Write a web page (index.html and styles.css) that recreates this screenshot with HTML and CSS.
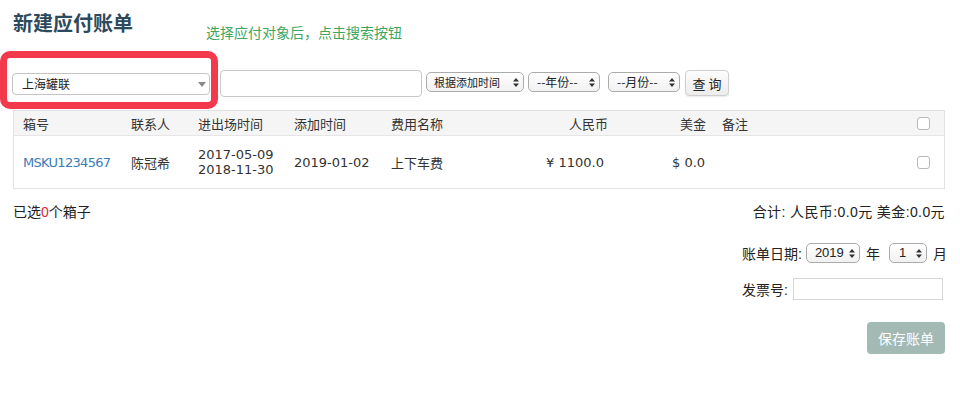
FILE: index.html
```html
<!DOCTYPE html>
<html lang="zh">
<head>
<meta charset="utf-8">
<title>新建应付账单</title>
<link rel="stylesheet" href="styles.css">
</head>
<body>
<div class="top">
  <h1 class="title">新建应付账单</h1>
  <span class="hint">选择应付对象后，点击搜索按钮</span>
</div>

<div class="filter">
  <div class="hl">
    <span class="wrap">
      <select class="sel-target"><option>上海罐联</option></select>
      <svg class="tri" width="8" height="5" viewBox="0 0 8 5"><path d="M0 0H8L4 5Z" fill="#8a8a8a"/></svg>
    </span>
  </div>
  <div class="controls">
    <input class="kw" type="text">
    <span class="wrap ms ms-by">
      <select><option>根据添加时间</option></select>
      <svg class="ud" width="6" height="9" viewBox="0 0 6 9"><path d="M0 3.6L3 0L6 3.6ZM0 5.4L3 9L6 5.4Z" fill="#333"/></svg>
    </span>
    <span class="wrap ms ms-y">
      <select><option>--年份--</option></select>
      <svg class="ud" width="6" height="9" viewBox="0 0 6 9"><path d="M0 3.6L3 0L6 3.6ZM0 5.4L3 9L6 5.4Z" fill="#333"/></svg>
    </span>
    <span class="wrap ms ms-m">
      <select><option>--月份--</option></select>
      <svg class="ud" width="6" height="9" viewBox="0 0 6 9"><path d="M0 3.6L3 0L6 3.6ZM0 5.4L3 9L6 5.4Z" fill="#333"/></svg>
    </span>
    <button class="btn-q">查 询</button>
  </div>
</div>

<div class="tbl">
  <div class="row head">
    <div class="c c1">箱号</div>
    <div class="c c2">联系人</div>
    <div class="c c3">进出场时间</div>
    <div class="c c4">添加时间</div>
    <div class="c c5">费用名称</div>
    <div class="c c6">人民币</div>
    <div class="c c7">美金</div>
    <div class="c c8">备注</div>
    <div class="c c9"><input class="cb" type="checkbox"></div>
  </div>
  <div class="row body">
    <div class="c c1"><a class="box-no" href="#">MSKU1234567</a></div>
    <div class="c c2">陈冠希</div>
    <div class="c c3 two">2017-05-09<br>2018-11-30</div>
    <div class="c c4">2019-01-02</div>
    <div class="c c5">上下车费</div>
    <div class="c c6 v6">¥ 1100.0</div>
    <div class="c c7 v7">$ 0.0</div>
    <div class="c c8"></div>
    <div class="c c9"><input class="cb" type="checkbox"></div>
  </div>
</div>

<div class="summary">
  <span>已选<span class="red">0</span>个箱子</span>
  <span class="total">合计: 人民币:0.0元 美金:0.0元</span>
</div>

<div class="bill">
  <div class="brow date-row">
    <span>账单日期:</span>
    <span class="wrap ms ms-year">
      <select><option>2019</option></select>
      <svg class="ud" width="6" height="9" viewBox="0 0 6 9"><path d="M0 3.6L3 0L6 3.6ZM0 5.4L3 9L6 5.4Z" fill="#333"/></svg>
    </span>
    <span class="unit">年</span>
    <span class="wrap ms ms-mon">
      <select><option>1</option></select>
      <svg class="ud" width="6" height="9" viewBox="0 0 6 9"><path d="M0 3.6L3 0L6 3.6ZM0 5.4L3 9L6 5.4Z" fill="#333"/></svg>
    </span>
    <span class="unit2">月</span>
  </div>
  <div class="brow inv-row">
    <span>发票号:</span>
    <input class="inv" type="text">
  </div>
  <div class="brow save-row">
    <button class="btn-save">保存账单</button>
  </div>
</div>
</body>
</html>
```

FILE: styles.css
```css
* { box-sizing: border-box; }
body {
  margin: 0;
  font-family: "Liberation Sans", "Noto Sans CJK SC", sans-serif;
  font-size: 14px;
  color: #333;
  background: #fff;
}
.top {
  display: flex;
  align-items: flex-start;
  height: 51px;
  padding-left: 13px;
}
.title {
  margin: 0;
  padding-top: 10px;
  font-size: 20px;
  line-height: 26px;
  font-weight: bold;
  color: #2d4a5c;
  font-family: "Noto Sans CJK SC", sans-serif;
}
.hint {
  margin-left: 73px;
  padding-top: 22px;
  line-height: 20px;
  font-size: 14px;
  color: #3ea65e;
  font-family: "Noto Sans CJK SC", sans-serif;
}
.filter {
  display: flex;
  align-items: flex-start;
  height: 57px;
}
.hl {
  width: 218px;
  height: 58px;
  border: 7px solid #f33a4c;
  border-radius: 10px;
  padding: 15px 0 0 5px;
}
.wrap {
  position: relative;
  display: inline-flex;
}
.wrap select {
  appearance: none;
  -webkit-appearance: none;
  margin: 0;
  font-family: "Noto Sans CJK SC", sans-serif;
  color: #222;
  outline: none;
}
.sel-target {
  width: 198px;
  height: 22px;
  border: 1px solid #c4c4c4;
  border-radius: 4px;
  background: #fff;
  padding: 0 0 0 9px;
  font-size: 12px;
  line-height: 20px;
}
.tri {
  position: absolute;
  right: 4px;
  top: 9px;
}
.controls {
  display: flex;
  align-items: flex-start;
  margin-left: 2px;
  margin-top: 19px;
}
.kw {
  width: 202px;
  height: 27px;
  margin: 0;
  border: 1px solid #c8c8c8;
  border-radius: 4px;
  background: #fff;
}
.ms { margin-top: 2px; }
.ms select {
  height: 20px;
  border: 1px solid #ababab;
  border-radius: 5px;
  background: linear-gradient(#ffffff, #f1f1f1);
  font-size: 11px;
  line-height: 18px;
  padding: 0 0 0 6px;
}
.ud {
  position: absolute;
  right: 5px;
  top: 6px;
}
.ms-by { margin-left: 4px; }
.ms-by select { width: 98px; padding-left: 7px; }
.ms-y { margin-left: 4px; }
.ms-y select { width: 72px; padding-left: 8px; font-size: 12px; }
.ms-m { margin-left: 8px; }
.ms-m select { width: 72px; padding-left: 8px; font-size: 12px; }
.btn-q {
  margin: 0 0 0 5px;
  width: 44px;
  height: 26px;
  border: 1px solid #cfcfcf;
  border-radius: 4px;
  background: linear-gradient(#fdfdfd, #ececec);
  box-shadow: 0 1px 1px rgba(0,0,0,0.08);
  font-family: "Noto Sans CJK SC", sans-serif;
  font-size: 13px;
  color: #222;
  padding: 0;
}
.tbl {
  margin: 2px 15px 0 13px;
  border: 1px solid #e2e2e2;
  font-family: "DejaVu Sans", "Noto Sans CJK SC", sans-serif;
  font-size: 13px;
  color: #333;
}
.row {
  display: grid;
  grid-template-columns: 107px 67px 96px 97px 139px 92px 100px 198px 34px;
  align-items: center;
}
.head {
  height: 25px;
  background: #f5f5f5;
  border-bottom: 1px solid #e6e6e6;
}
.body { height: 52px; }
.c { padding-left: 10px; white-space: nowrap; }
.c1 { padding-left: 9px; }
.c6 { text-align: right; padding-right: 4px; padding-left: 0; }
.v6 { padding-right: 8px; }
.c7 { text-align: right; padding-right: 6px; padding-left: 0; }
.v7 { text-align: left; padding-left: 60px; }
.c8 { padding-left: 10px; }
.c9 { padding-left: 7px; display: flex; }
.two { line-height: 15px; }
.box-no {
  color: #3a7cb8;
  text-decoration: none;
  letter-spacing: -0.7px;
}
.cb {
  appearance: none;
  -webkit-appearance: none;
  margin: 0;
  width: 13px;
  height: 13px;
  border: 1px solid #b8b8b8;
  border-radius: 3px;
  background: #fff;
}
.summary {
  display: flex;
  justify-content: space-between;
  margin: 13px 15px 0 13px;
  line-height: 20px;
  color: #222;
}
.total { letter-spacing: 0.4px; }
.red { color: #e3262e; }
.bill {
  width: 218px;
  margin-left: 742px;
  color: #222;
}
.brow {
  display: flex;
  align-items: center;
}
.date-row { margin-top: 20px; height: 22px; }
.ms-year { margin-left: 4px; margin-top: 0; }
.ms-year select { width: 54px; font-size: 13px; padding-left: 8px; font-family: "Liberation Sans", sans-serif; }
.unit { margin-left: 6px; }
.ms-mon { margin-left: 9px; margin-top: 0; }
.ms-mon select { width: 38px; font-size: 13px; padding-left: 9px; font-family: "Liberation Sans", sans-serif; }
.unit2 { margin-left: 6px; }
.inv-row { margin-top: 14px; }
.inv {
  margin: 0 0 0 5px;
  width: 150px;
  height: 22px;
  border: 1px solid #d6d6d6;
  background: #fff;
}
.save-row { margin-top: 22px; padding-left: 125px; }
.btn-save {
  width: 78px;
  height: 32px;
  border: none;
  border-radius: 4px;
  background: #a3b9b3;
  color: #fff;
  font-family: "Noto Sans CJK SC", sans-serif;
  font-size: 14px;
  padding: 0;
}
```
